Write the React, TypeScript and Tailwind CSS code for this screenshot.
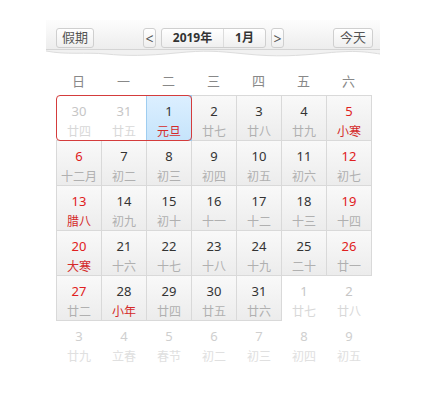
import React from 'react';

type Day = {
  n: number;
  lunar: string;
  kind?: 'prev' | 'next' | 'far';
  redNum?: boolean;
  redLunar?: boolean;
  today?: boolean;
};

const weeks: Day[][] = [
  [
    { n: 30, lunar: '廿四', kind: 'prev' },
    { n: 31, lunar: '廿五', kind: 'prev' },
    { n: 1, lunar: '元旦', redLunar: true, today: true },
    { n: 2, lunar: '廿七' },
    { n: 3, lunar: '廿八' },
    { n: 4, lunar: '廿九' },
    { n: 5, lunar: '小寒', redNum: true, redLunar: true },
  ],
  [
    { n: 6, lunar: '十二月', redNum: true },
    { n: 7, lunar: '初二' },
    { n: 8, lunar: '初三' },
    { n: 9, lunar: '初四' },
    { n: 10, lunar: '初五' },
    { n: 11, lunar: '初六' },
    { n: 12, lunar: '初七', redNum: true },
  ],
  [
    { n: 13, lunar: '腊八', redNum: true, redLunar: true },
    { n: 14, lunar: '初九' },
    { n: 15, lunar: '初十' },
    { n: 16, lunar: '十一' },
    { n: 17, lunar: '十二' },
    { n: 18, lunar: '十三' },
    { n: 19, lunar: '十四', redNum: true },
  ],
  [
    { n: 20, lunar: '大寒', redNum: true, redLunar: true },
    { n: 21, lunar: '十六' },
    { n: 22, lunar: '十七' },
    { n: 23, lunar: '十八' },
    { n: 24, lunar: '十九' },
    { n: 25, lunar: '二十' },
    { n: 26, lunar: '廿一', redNum: true },
  ],
  [
    { n: 27, lunar: '廿二', redNum: true },
    { n: 28, lunar: '小年', redLunar: true },
    { n: 29, lunar: '廿四' },
    { n: 30, lunar: '廿五' },
    { n: 31, lunar: '廿六' },
    { n: 1, lunar: '廿七', kind: 'next' },
    { n: 2, lunar: '廿八', kind: 'next' },
  ],
  [
    { n: 3, lunar: '廿九', kind: 'far' },
    { n: 4, lunar: '立春', kind: 'far' },
    { n: 5, lunar: '春节', kind: 'far' },
    { n: 6, lunar: '初二', kind: 'far' },
    { n: 7, lunar: '初三', kind: 'far' },
    { n: 8, lunar: '初四', kind: 'far' },
    { n: 9, lunar: '初五', kind: 'far' },
  ],
];

const weekdays = ['日', '一', '二', '三', '四', '五', '六'];

const btn =
  'h-[20px] flex items-center justify-center rounded-[3px] border border-[#cfcfcf] bg-linear-to-b from-[#ffffff] to-[#efefef] text-[13px] text-[#555]';

const Cell: React.FC<{ day: Day; first: boolean }> = ({ day, first }) => {
  const faded = day.kind !== undefined;
  let box = 'border-transparent';
  if (!faded) {
    box = day.today
      ? 'relative z-10 border-[#9fcdf0] bg-linear-to-b from-[#dcefff] to-[#c6e4fb]'
      : 'border-[#d9d9d9] bg-linear-to-b from-[#f9f9f9] to-[#ececec]';
  }
  let numColor = day.redNum ? 'text-[#e02020]' : 'text-[#333]';
  let lunarColor = day.redLunar ? 'text-[#d42a2a]' : 'text-[#b0b0b0]';
  if (day.kind === 'prev' || day.kind === 'next') {
    numColor = 'text-[#c6c6c6]';
    lunarColor = 'text-[#d8d8d8]';
  }
  if (day.kind === 'far') {
    numColor = 'text-[#cfcfcf]';
    lunarColor = 'text-[#e0e0e0]';
  }
  return (
    <div
      className={`w-[46px] h-[46px] shrink-0 border flex flex-col items-center ${box} ${first ? '' : '-ml-px'}`}
    >
      <span className={`mt-[6px] text-[13px] leading-[18px] ${numColor}`}>{day.n}</span>
      <span className={`mt-[3px] text-[12px] leading-[18px] ${lunarColor}`}>{day.lunar}</span>
    </div>
  );
};

export default function App() {
  return (
    <div className="min-h-[406px] bg-white pt-[20px] pl-[46px] font-['Noto_Sans','Noto_Sans_CJK_SC',sans-serif]">
      <div className="w-[334px]">
        <div className="h-[30px] flex items-start pt-[8px] pl-[10px] pr-[7px] bg-linear-to-b from-[#fdfdfd] to-[#ededed] border-b border-[#d4d4d4]">
          <div className={`${btn} w-[38px]`}>假期</div>
          <div className="ml-[49px] flex gap-[5px]">
            <div className={`${btn} w-[13px] text-[14px] text-[#333]`}>&lt;</div>
            <div className="flex h-[20px] w-[105px] rounded-[3px] border border-[#cfcfcf] bg-linear-to-b from-[#ffffff] to-[#efefef] text-[12px] font-bold text-[#333]">
              <div className="w-[62px] flex items-center justify-center border-r border-[#dcdcdc]">2019年</div>
              <div className="flex-1 flex items-center justify-center">1月</div>
            </div>
            <div className={`${btn} w-[13px] text-[14px] text-[#333]`}>&gt;</div>
          </div>
          <div className={`${btn} w-[40px] ml-[49px]`}>今天</div>
        </div>
        <svg width="334" height="8" viewBox="0 0 334 8" className="block">
          <path
            d="M0 1 C20 5 40 2 60 4 S100 6 130 3 S170 1 200 4 S250 6 280 3 S320 2 334 4 L334 0 L0 0 Z"
            fill="#f1f1f1"
          />
          <path
            d="M0 1 C20 5 40 2 60 4 S100 6 130 3 S170 1 200 4 S250 6 280 3 S320 2 334 4"
            fill="none"
            stroke="#dddddd"
            strokeWidth="1"
          />
        </svg>
        <div className="ml-[10px] h-[37px] flex items-end pb-[6px]">
          {weekdays.map((w) => (
            <div key={w} className="w-[45px] text-center text-[13px] leading-[16px] text-[#888]">
              {w}
            </div>
          ))}
        </div>
        <div className="ml-[10px] flex flex-col">
          {weeks.map((week, wi) => (
            <div key={wi} className={`relative flex ${wi === 0 ? '' : '-mt-px'}`}>
              {week.map((d, di) => (
                <Cell key={di} day={d} first={di === 0} />
              ))}
              {wi === 0 && (
                <div className="absolute left-0 top-0 z-20 w-[136px] h-[46px] rounded-[4px] border-[1.5px] border-[#d43c3c]" />
              )}
            </div>
          ))}
        </div>
      </div>
    </div>
  );
}
